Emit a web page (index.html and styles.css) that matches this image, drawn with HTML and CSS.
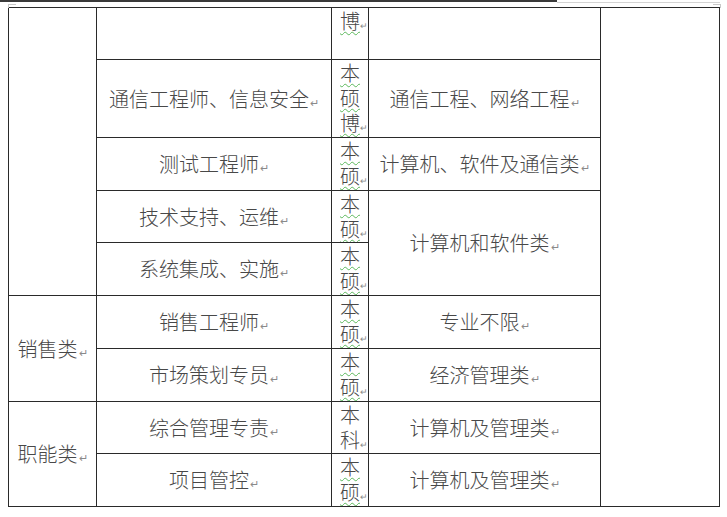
FILE: index.html
```html
<!DOCTYPE html>
<html lang="zh">
<head>
<meta charset="utf-8">
<title>岗位表</title>
<link rel="stylesheet" href="styles.css">
</head>
<body>
<div class="prev">
  <div class="prev-dark"></div>
  <div class="prev-light"></div>
</div>
<div class="marks"><span class="crop crop-l"></span><span class="crop crop-r"></span></div>
<table class="grid">
  <colgroup>
    <col class="c1"><col class="c2"><col class="c3"><col class="c4"><col class="c5">
  </colgroup>
  <tr class="h52">
    <td rowspan="5"></td>
    <td></td>
    <td class="deg"><div><span class="w">博</span><i class="rm">↵</i></div></td>
    <td></td>
    <td rowspan="9"></td>
  </tr>
  <tr class="h78">
    <td>通信工程师、信息安全<i class="rm">↵</i></td>
    <td class="deg"><div><span class="w">本</span></div><div><span class="w">硕</span></div><div><span class="w">博</span><i class="rm">↵</i></div></td>
    <td>通信工程、网络工程<i class="rm">↵</i></td>
  </tr>
  <tr class="h53">
    <td>测试工程师<i class="rm">↵</i></td>
    <td class="deg"><div><span class="w">本</span></div><div><span class="w">硕</span><i class="rm">↵</i></div></td>
    <td>计算机、软件及通信类<i class="rm">↵</i></td>
  </tr>
  <tr class="h52">
    <td>技术支持、运维<i class="rm">↵</i></td>
    <td class="deg"><div><span class="w">本</span></div><div><span class="w">硕</span><i class="rm">↵</i></div></td>
    <td rowspan="2">计算机和软件类<i class="rm">↵</i></td>
  </tr>
  <tr class="h53">
    <td>系统集成、实施<i class="rm">↵</i></td>
    <td class="deg"><div><span class="w">本</span></div><div><span class="w">硕</span><i class="rm">↵</i></div></td>
  </tr>
  <tr class="h53">
    <td rowspan="2">销售类<i class="rm">↵</i></td>
    <td>销售工程师<i class="rm">↵</i></td>
    <td class="deg"><div><span class="w">本</span></div><div><span class="w">硕</span><i class="rm">↵</i></div></td>
    <td>专业不限<i class="rm">↵</i></td>
  </tr>
  <tr class="h53">
    <td>市场策划专员<i class="rm">↵</i></td>
    <td class="deg"><div><span class="w">本</span></div><div><span class="w">硕</span><i class="rm">↵</i></div></td>
    <td>经济管理类<i class="rm">↵</i></td>
  </tr>
  <tr class="h52">
    <td rowspan="2">职能类<i class="rm">↵</i></td>
    <td>综合管理专责<i class="rm">↵</i></td>
    <td class="deg"><div>本</div><div>科<i class="rm">↵</i></div></td>
    <td>计算机及管理类<i class="rm">↵</i></td>
  </tr>
  <tr class="h53">
    <td>项目管控<i class="rm">↵</i></td>
    <td class="deg"><div><span class="w">本</span></div><div><span class="w">硕</span><i class="rm">↵</i></div></td>
    <td>计算机及管理类<i class="rm">↵</i></td>
  </tr>
</table>
</body>
</html>
```

FILE: styles.css
```css
html, body {
  margin: 0;
  padding: 0;
  background: #ffffff;
}

body {
  font-family: "Noto Sans CJK SC", "Noto Sans", sans-serif;
  color: #484848;
  width: 727px;
  height: 517px;
  overflow: hidden;
}

.prev {
  display: flex;
  align-items: flex-start;
  height: 3px;
}

.prev-dark {
  width: 557px;
  height: 2px;
  background: #3a3a3a;
}

.prev-light {
  width: 163px;
  height: 1px;
  margin-top: 2px;
  background: #d4d4d4;
}

.marks {
  display: flex;
  justify-content: space-between;
  height: 4px;
  padding: 1px 6px 0 8px;
  box-sizing: border-box;
  width: 727px;
}

.crop {
  display: block;
  width: 7px;
  height: 3px;
  border-top: 1px solid #c8c8c8;
}

.crop-l {
  border-left: 1px solid #c8c8c8;
}

.crop-r {
  border-right: 1px solid #c8c8c8;
}

.grid {
  margin-left: 8px;
  width: 711px;
  border-collapse: collapse;
  table-layout: fixed;
  font-size: 20px;
  font-weight: 300;
  line-height: 24px;
}

.c1 { width: 88px; }
.c2 { width: 235px; }
.c3 { width: 37px; }
.c4 { width: 232px; }
.c5 { width: 119px; }

.grid td {
  border: 1px solid #2a2a2a;
  padding: 0;
  text-align: center;
  vertical-align: middle;
  white-space: nowrap;
  overflow: hidden;
}

.h52 { height: 52px; }
.h53 { height: 53px; }
.h78 { height: 78px; }

.grid td.deg {
  vertical-align: top;
  text-align: left;
  padding-left: 8px;
  line-height: 25px;
}

.deg div {
  height: 25px;
}

.w {
  text-decoration: underline wavy #5cb85c;
  text-decoration-thickness: 1px;
  text-underline-offset: 2px;
}

.rm {
  font-style: normal;
  font-family: "DejaVu Sans", sans-serif;
  font-size: 11px;
  line-height: 0;
  color: #8a8a8a;
  margin-left: 1px;
}

.deg .rm {
  font-size: 9px;
  margin-left: 0;
}
```
